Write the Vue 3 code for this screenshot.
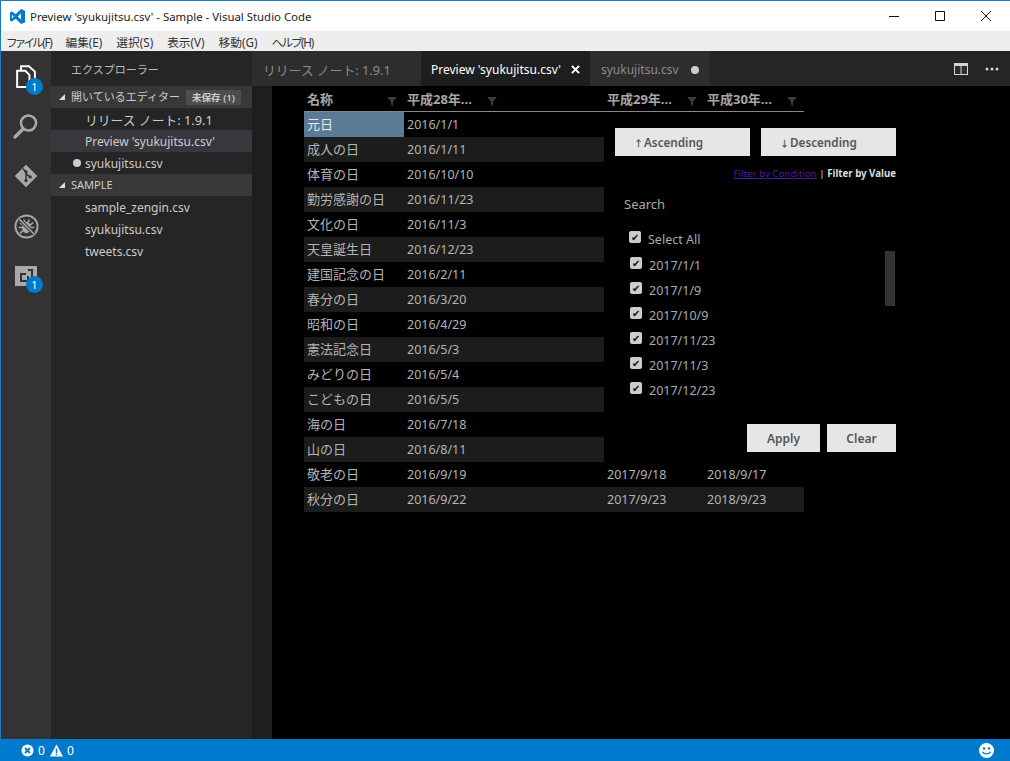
<script setup>
const menus = [
  { label: 'ファイル(F)', kana: true },
  { label: '編集(E)' },
  { label: '選択(S)' },
  { label: '表示(V)' },
  { label: '移動(G)' },
  { label: 'ヘルプ(H)', kana: true }
]

const files = ['sample_zengin.csv', 'syukujitsu.csv', 'tweets.csv']

const rows = [
  ['元日', '2016/1/1'],
  ['成人の日', '2016/1/11'],
  ['体育の日', '2016/10/10'],
  ['勤労感謝の日', '2016/11/23'],
  ['文化の日', '2016/11/3'],
  ['天皇誕生日', '2016/12/23'],
  ['建国記念の日', '2016/2/11'],
  ['春分の日', '2016/3/20'],
  ['昭和の日', '2016/4/29'],
  ['憲法記念日', '2016/5/3'],
  ['みどりの日', '2016/5/4'],
  ['こどもの日', '2016/5/5'],
  ['海の日', '2016/7/18'],
  ['山の日', '2016/8/11'],
  ['敬老の日', '2016/9/19', '2017/9/18', '2018/9/17'],
  ['秋分の日', '2016/9/22', '2017/9/23', '2018/9/23']
]

const headers = ['名称', '平成28年...', '', '平成29年...', '平成30年...']

const dates = ['2017/1/1', '2017/1/9', '2017/10/9', '2017/11/23', '2017/11/3', '2017/12/23']
</script>

<template>
  <div class="window">
    <div class="titlebar">
      <svg class="logo" width="17" height="15" viewBox="0 0 18 16">
        <path fill="#007acc" d="M12.8 0 7 5.6 3 2.6 1 3.6v8.8l2 1 4-3 5.8 5.6 4.2-1.8V1.8zM3 10V6l2.2 2zm9.8 1.4L9.4 8l3.4-3.4z" />
      </svg>
      <span class="title">Preview 'syukujitsu.csv' - Sample - Visual Studio Code</span>
      <div class="win-btns">
        <svg width="46" height="30" viewBox="0 0 46 30"><path d="M18 15.5h10" stroke="#111" fill="none" /></svg>
        <svg width="46" height="30" viewBox="0 0 46 30"><path d="M18.5 10.5h9v9h-9z" stroke="#111" fill="none" /></svg>
        <svg width="46" height="30" viewBox="0 0 46 30"><path d="M18 10l10 10M28 10 18 20" stroke="#111" fill="none" /></svg>
      </div>
    </div>
    <div class="menubar">
      <span v-for="m in menus" :key="m.label" class="menu" :class="{ kana: m.kana }">{{ m.label }}</span>
    </div>

    <div class="main">
      <div class="activity">
        <div class="act-item">
          <svg width="20" height="23" viewBox="0 0 24 28" fill="none" stroke="#fff" stroke-width="2.4">
            <path d="M1.2 7h10l5 5v14.8h-15z" />
            <path d="M6 6V1.5h9.500l7.300 6.500v14.500h-5.500" />
          </svg>
          <span class="act-badge top">1</span>
        </div>
        <div class="act-item">
          <svg width="26" height="26" viewBox="0 0 26 26" fill="none" stroke="#a9a9a9">
            <circle cx="15.500" cy="10" r="7.500" stroke-width="2.600" />
            <path d="M10 16 2 24" stroke-width="3.200" stroke-linecap="round" />
          </svg>
        </div>
        <div class="act-item">
          <svg width="24" height="24" viewBox="0 0 26 26">
            <path fill="#a9a9a9" d="M13 .8 25.200 13 13 25.200.8 13z" />
            <path stroke="#333" stroke-width="1.600" fill="none" d="M9.500 5 13 8.500v9M13 10l4 4" />
            <circle cx="13" cy="8.500" r="1.800" fill="#333" />
            <circle cx="13" cy="18" r="1.800" fill="#333" />
            <circle cx="17.500" cy="14" r="1.800" fill="#333" />
          </svg>
        </div>
        <div class="act-item">
          <svg width="25" height="25" viewBox="0 0 26 26" fill="none" stroke="#a9a9a9">
            <circle cx="13" cy="13" r="11.500" stroke-width="2" />
            <ellipse cx="13" cy="14" rx="4.500" ry="6" fill="#a9a9a9" stroke="none" />
            <path d="M6 9l3.500 2.500M20 9l-3.500 2.500M5 14h4M21 14h-4M6 20l3.500-2.500M20 20l-3.500-2.500M10 6l1.500 2.500M16 6l-1.500 2.500" stroke-width="1.600" />
            <path d="M5 5l16 16" stroke="#333" stroke-width="3.600" />
            <path d="M5 5l16 16" stroke-width="1.600" />
          </svg>
        </div>
        <div class="act-item">
          <svg width="24" height="24" viewBox="0 0 24 24">
            <path fill="#a9a9a9" d="M1 2h22v20H1z" />
            <path fill="#333" d="M6 9h6v3h3v6H6zM14 5h5v8h-2V7h-3z" />
            <path fill="#a9a9a9" d="M8 11h5v5H8z" />
          </svg>
          <span class="act-badge">1</span>
        </div>
      </div>

      <div class="sidebar">
        <div class="side-title">エクスプローラー</div>
        <div class="section">
          <span class="twisty"></span>開いているエディター<span class="unsaved">未保存 (1)</span>
        </div>
        <div class="file cjk">リリース ノート: 1.9.1</div>
        <div class="file selected">Preview 'syukujitsu.csv'</div>
        <div class="file"><span class="dirty"></span>syukujitsu.csv</div>
        <div class="section"><span class="twisty"></span>SAMPLE</div>
        <div v-for="f in files" :key="f" class="file">{{ f }}</div>
      </div>

      <div class="editor">
        <div class="tabs">
          <div class="tab first">リリース ノート: 1.9.1</div>
          <div class="tab active">
            Preview 'syukujitsu.csv'
            <svg class="tab-x" width="9" height="9" viewBox="0 0 10 10"><path d="M1 1l8 8M9 1 1 9" stroke="#fff" stroke-width="2.200" /></svg>
          </div>
          <div class="tab last">syukujitsu.csv<span class="dirty tab-dot"></span></div>
          <div class="tab-actions">
            <svg width="14" height="12" viewBox="0 0 14 12">
              <path fill="#d4d4d4" d="M0 0h14v12H0z" />
              <path fill="#2d2d2d" d="M1 3h5.500v8H1zM7.500 3H13v8H7.500z" />
            </svg>
            <svg width="14" height="4" viewBox="0 0 14 4" fill="#d4d4d4">
              <circle cx="2" cy="2" r="1.500" /><circle cx="7" cy="2" r="1.500" /><circle cx="12" cy="2" r="1.500" />
            </svg>
          </div>
        </div>

        <div class="content">
          <div class="gutter"></div>
          <div class="preview">
            <div class="grid">
              <div class="grid-head">
                <div v-for="(h, i) in headers" :key="i" class="head-cell">
                  {{ h }}
                  <svg v-if="h" class="funnel" width="10" height="10" viewBox="0 0 10 10"><path fill="#3c3c3c" d="M0 1h10L6 5.500V10L4 8.500v-3z" /></svg>
                </div>
              </div>
              <div v-for="(r, i) in rows" :key="r[0]" class="grid-row">
                <div class="cell name" :class="{ current: i === 0 }">{{ r[0] }}</div>
                <div class="cell">{{ r[1] }}</div>
                <div class="cell"></div>
                <div class="cell">{{ r[2] }}</div>
                <div class="cell">{{ r[3] }}</div>
              </div>

              <div class="popup">
                <div class="sort-btns">
                  <button class="btn sort"><span class="arrow">↑</span>Ascending</button>
                  <button class="btn sort"><span class="arrow">↓</span>Descending</button>
                </div>
                <div class="filter-links">
                  <a class="cond-link">Filter by Condition</a> | <b>Filter by Value</b>
                </div>
                <div class="search">Search</div>
                <label class="check all"><span class="box">✔</span>Select All</label>
                <div class="list">
                  <label v-for="d in dates" :key="d" class="check"><span class="box">✔</span>{{ d }}</label>
                  <div class="thumb"></div>
                </div>
                <div class="actions">
                  <button class="btn apply">Apply</button>
                  <button class="btn clear">Clear</button>
                </div>
              </div>
            </div>
          </div>
        </div>
      </div>
    </div>

    <div class="statusbar">
      <svg width="13" height="13" viewBox="0 0 13 13">
        <circle cx="6.500" cy="6.500" r="6" fill="#fff" />
        <path d="M4 4l5 5M9 4 4 9" stroke="#007acc" stroke-width="1.800" />
      </svg>
      <span class="count">0</span>
      <svg class="warn" width="13" height="13" viewBox="0 0 13 13">
        <path fill="#fff" d="M6.500 .5 13 12.500H0z" />
        <path stroke="#007acc" stroke-width="1.500" d="M6.500 4.500v4.500M6.500 9.800v1.400" />
      </svg>
      <span class="count">0</span>
      <svg class="smile" width="15" height="15" viewBox="0 0 15 15" fill="#fff">
        <circle cx="7.500" cy="7.500" r="7.500" />
        <circle cx="5" cy="5.500" r="1.200" fill="#007acc" />
        <circle cx="10" cy="5.500" r="1.200" fill="#007acc" />
        <path d="M3.500 8.800c1 2.600 7 2.600 8 0" stroke="#007acc" stroke-width="1.200" fill="none" />
      </svg>
    </div>
  </div>
</template>

<style scoped>
.window {
  width: 1010px;
  height: 761px;
  display: flex;
  flex-direction: column;
  overflow: hidden;
  box-sizing: border-box;
  border-top: 1px solid #1a7cc0;
  font-family: "Noto Sans", "Noto Sans CJK JP", sans-serif;
  font-size: 13px;
}
.titlebar { height: 30px; background: #fff; display: flex; align-items: center; padding-left: 8px; border-left: 1px solid #1a7cc0; }
.logo { margin-right: 4px; }
.title { font-size: 11.4px; color: #222; }
.win-btns { margin-left: auto; display: flex; margin-right: 1px; }
.menubar { height: 20px; background: #eee; display: flex; padding-left: 6px; gap: 14px; border-left: 1px solid #1a7cc0; align-items: center; }
.menu { font-size: 11.7px; color: #333; }
.menu.kana { font-feature-settings: "palt"; letter-spacing: -1.3px; }

.main { flex: 1; display: flex; min-height: 0; }
.activity { width: 50px; background: #333; border-left: 1px solid #1a7cc0; display: flex; flex-direction: column; align-items: center; }
.act-item { height: 50px; width: 50px; display: flex; align-items: center; justify-content: center; position: relative; }
.act-badge {
  position: absolute; left: 25px; top: 25px; width: 17px; height: 17px; border-radius: 50%;
  background: #007acc; color: #fff; font-size: 11px; line-height: 17px; text-align: center;
}
.act-badge.top { top: 27px; }

.sidebar { width: 201px; background: #252526; color: #ccc; }
.side-title { height: 35px; line-height: 37px; padding-left: 20px; font-size: 11px; color: #bbb; }
.section { height: 22px; line-height: 22px; background: #383838; font-size: 11px; position: relative; padding-left: 20px; color: #ccc; white-space: nowrap; }
.twisty { position: absolute; left: 8px; top: 8px; width: 0; height: 0; border-left: 6px solid transparent; border-bottom: 6px solid #ddd; }
.unsaved { background: #4d4d4d; margin-left: 6px; padding: 1px 6px; font-size: 9.6px; font-weight: 600; }
.file { height: 22px; line-height: 24px; padding-left: 34px; font-size: 12px; color: #ccc; position: relative; white-space: nowrap; }
.file.cjk { font-size: 12.8px; }
.file.selected { background: #37373d; }
.dirty { display: inline-block; width: 8px; height: 8px; border-radius: 50%; background: #ccc; }
.file .dirty { position: absolute; left: 22px; top: 7px; }

.editor { flex: 1; display: flex; flex-direction: column; min-width: 0; }
.tabs { height: 35px; background: #252526; display: flex; align-items: center; flex: none; }
.tab { height: 35px; line-height: 38px; background: #2d2d2d; color: #8b8b8b; font-size: 12px; box-sizing: border-box; white-space: nowrap; position: relative; }
.tab.first { width: 169px; padding-left: 11px; font-size: 12.8px; }
.tab.active { width: 169px; padding-left: 10px; background: #1e1e1e; color: #fff; }
.tab-x { position: absolute; left: 150px; top: 14px; }
.tab.last { width: 120px; padding-left: 11px; }
.tab-dot { position: absolute; left: 101px; top: 15px; }
.tab-actions { margin-left: auto; display: flex; align-items: center; gap: 17px; padding-right: 11px; }

.content { flex: 1; display: flex; min-height: 0; }
.gutter { width: 20px; background: #1e1e1e; }
.preview { flex: 1; background: #000; padding-left: 32px; }

.grid { width: 500px; position: relative; color: #b4b4b4; font-size: 12.5px; }
.grid-head { display: flex; height: 25px; border-bottom: 1px solid #888; }
.head-cell { width: 100px; padding-left: 3px; box-sizing: border-box; position: relative; line-height: 26px; font-size: 13px; font-weight: 700; color: #a6a6a6; white-space: nowrap; }
.funnel { position: absolute; right: 7px; top: 10px; }
.grid-row { display: flex; height: 25px; line-height: 25px; }
.grid-row:nth-of-type(odd) { background: #1c1c1c; }
.cell { width: 100px; padding-left: 3px; box-sizing: border-box; white-space: nowrap; }
.cell.name { font-size: 13px; line-height: 24px; }
.cell.current { background: #5a7a96; color: #e8e8e8; }

.popup { position: absolute; left: 300px; top: 26px; width: 300px; height: 350px; background: #000; }
.btn { display: block; border: none; background: #e6e6e6; color: #555; font: inherit; font-weight: 600; font-size: 12px; height: 28px; padding: 0; }
.sort-btns { display: flex; gap: 11px; padding: 16px 0 0 11px; }
.sort { width: 135px; text-align: left; padding-left: 19px; font-size: 11.7px; }
.arrow { font-size: 9px; margin-right: 1px; }
.filter-links { text-align: right; margin-top: 10px; padding-right: 8px; font-size: 9.7px; line-height: 16px; color: #ddd; }
.filter-links b { font-weight: 700; }
.cond-link { color: #4a1ea8; text-decoration: underline; }
.search { margin: 13px 0 0 20px; font-size: 13px; line-height: 18px; color: #aaa; }
.check { display: flex; align-items: center; height: 25px; padding-top: 2px; box-sizing: border-box; font-size: 12.5px; color: #aaa; }
.check.all { margin: 14px 0 0 25px; padding-top: 0; }
.box {
  width: 12px; height: 12px; background: #ccc; color: #111; border-radius: 2px; font-size: 10px; line-height: 12px;
  text-align: center; margin-right: 7px; margin-top: -6px; flex: none;
}
.list { position: relative; padding-left: 26px; height: 150px; }
.thumb { position: absolute; right: 9px; top: -1px; width: 10px; height: 55px; background: #333; }
.actions { display: flex; justify-content: flex-end; gap: 7px; margin-top: 22px; padding-right: 8px; }
.apply { width: 73px; }
.clear { width: 69px; }

.statusbar { height: 22px; flex: none; background: #007acc; color: #fff; display: flex; align-items: center; padding-left: 21px; font-size: 12px; }
.count { margin-left: 4px; }
.warn { margin-left: 5px; }
.smile { margin-left: auto; margin-right: 16px; }
</style>

<style>
html, body { margin: 0; background: #000; }
</style>
